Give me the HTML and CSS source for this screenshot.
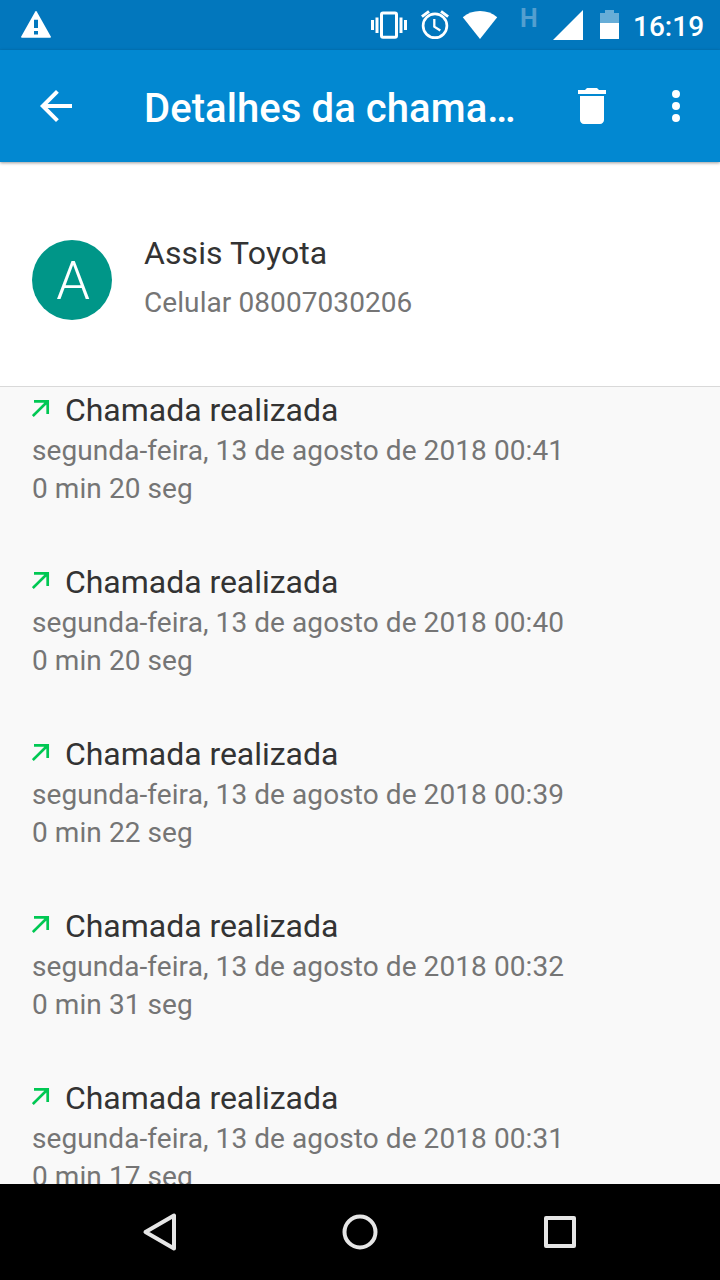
FILE: index.html
```
<!DOCTYPE html>
<html lang="pt-BR">
<head>
  <meta charset="UTF-8" />
  <meta name="viewport" content="width=device-width, initial-scale=1.0"/>
  <title>Detalhes da chamada</title>
  <link rel="stylesheet" href="styles.css">
</head>
<body>

  <div class="status-bar">
    <svg class="icon-warning" width="32" height="30" viewBox="0 0 32 30">
      <path d="M15.300 1.600Q16 .6 16.700 1.600L30.800 26.500Q31.200 27.800 30 27.800H2Q.8 27.800 1.200 26.500Z" fill="#fff"/>
      <path d="M14 9.800h4v8.200h-4zM14 21h4v3.500h-4z" fill="#0277bd"/>
    </svg>

    <div class="status-icons">
      <svg width="36" height="30" viewBox="0 0 36 30">
        <rect x="10.500" y="2.900" width="15" height="24.300" rx="1.500" fill="none" stroke="#fff" stroke-width="3"/>
        <path d="M0 10h3v10H0zM4.500 7.500h3v15.500h-3zM28.500 7.500h3v15.500h-3zM33 10h3v10h-3z" fill="#fff"/>
      </svg>
      <svg class="icon-alarm" width="28" height="30" viewBox="0 0 28 30">
        <g fill="none" stroke="#fff">
          <circle cx="14" cy="15.800" r="11.900" stroke-width="2.700"/>
          <path d="M.9 6.700L8 1.300M20 1.300l7.100 5.400" stroke-width="2.900"/>
          <path d="M13.300 9v7.700l6 3.800" stroke-width="2.300"/>
        </g>
      </svg>
      <svg class="icon-wifi" width="36" height="30" viewBox="0 0 36 30">
        <path d="M18 29L.8 7.300Q8 1 18 1t17.200 6.300Z" fill="#fff"/>
      </svg>
      <span class="network">H</span>
      <svg class="icon-signal" width="30" height="30" viewBox="0 0 30 30">
        <path d="M0 30L30 0v30z" fill="#fff"/>
      </svg>
      <svg class="icon-battery" width="19" height="30" viewBox="0 0 19 30">
        <path d="M5 0h9v3h5v10H0V3h5z" fill="#67add7"/>
        <path d="M0 13h19v15.500q0 .5-.5.5H.5q-.5 0-.5-.5z" fill="#fff"/>
      </svg>
      <span class="clock">16:19</span>
    </div>
  </div>

  <header class="toolbar">
    <svg width="48" height="48" viewBox="0 0 24 24">
      <path d="M20 11H7.830l5.590-5.590L12 4l-8 8 8 8 1.410-1.410L7.830 13H20z" fill="#fff"/>
    </svg>
    <h1>Detalhes da chama…</h1>
    <svg class="icon-delete" width="48" height="48" viewBox="0 0 24 24">
      <path d="M6 19c0 1.100.9 2 2 2h8c1.100 0 2-.9 2-2V7H6zM19 4h-3.500l-1-1h-5l-1 1H5v2h14z" fill="#fff"/>
    </svg>
    <svg class="icon-more" width="48" height="48" viewBox="0 0 24 24">
      <path d="M12 8a2 2 0 1 0 0-4 2 2 0 0 0 0 4zm0 2a2 2 0 1 0 0 4 2 2 0 0 0 0-4zm0 6a2 2 0 1 0 0 4 2 2 0 0 0 0-4z" fill="#fff"/>
    </svg>
  </header>

  <section class="contact">
    <div class="avatar">A</div>
    <div>
      <div class="name">Assis Toyota</div>
      <div class="number">Celular 08007030206</div>
    </div>
  </section>

  <main class="calls">
    <div class="call">
      <div class="call-type">
        <svg width="18" height="18" viewBox="0 0 18 18"><path d="M2 1.300h13.700V14M15.500 1.500L.8 16" fill="none" stroke="#00c853" stroke-width="2.700"/></svg>
        Chamada realizada
      </div>
      <div class="detail">segunda-feira, 13 de agosto de 2018 00:41</div>
      <div class="detail">0 min 20 seg</div>
    </div>
    <div class="call">
      <div class="call-type">
        <svg width="18" height="18" viewBox="0 0 18 18"><path d="M2 1.300h13.700V14M15.500 1.500L.8 16" fill="none" stroke="#00c853" stroke-width="2.700"/></svg>
        Chamada realizada
      </div>
      <div class="detail">segunda-feira, 13 de agosto de 2018 00:40</div>
      <div class="detail">0 min 20 seg</div>
    </div>
    <div class="call">
      <div class="call-type">
        <svg width="18" height="18" viewBox="0 0 18 18"><path d="M2 1.300h13.700V14M15.500 1.500L.8 16" fill="none" stroke="#00c853" stroke-width="2.700"/></svg>
        Chamada realizada
      </div>
      <div class="detail">segunda-feira, 13 de agosto de 2018 00:39</div>
      <div class="detail">0 min 22 seg</div>
    </div>
    <div class="call">
      <div class="call-type">
        <svg width="18" height="18" viewBox="0 0 18 18"><path d="M2 1.300h13.700V14M15.500 1.500L.8 16" fill="none" stroke="#00c853" stroke-width="2.700"/></svg>
        Chamada realizada
      </div>
      <div class="detail">segunda-feira, 13 de agosto de 2018 00:32</div>
      <div class="detail">0 min 31 seg</div>
    </div>
    <div class="call">
      <div class="call-type">
        <svg width="18" height="18" viewBox="0 0 18 18"><path d="M2 1.300h13.700V14M15.500 1.500L.8 16" fill="none" stroke="#00c853" stroke-width="2.700"/></svg>
        Chamada realizada
      </div>
      <div class="detail">segunda-feira, 13 de agosto de 2018 00:31</div>
      <div class="detail">0 min 17 seg</div>
    </div>
  </main>

  <nav class="nav-bar">
    <svg width="40" height="40" viewBox="0 0 40 40">
      <path d="M5.500 20L34 3.500v33z"/>
    </svg>
    <svg width="40" height="40" viewBox="0 0 40 40">
      <circle cx="20" cy="20" r="15.500"/>
    </svg>
    <svg width="40" height="40" viewBox="0 0 40 40">
      <rect x="6" y="6" width="28" height="28"/>
    </svg>
  </nav>

</body>
</html>
```

FILE: styles.css
```
:root {
  --primary: #0288d1;
  --primary-dark: #0277bd;
  --text: #333;
  --text-light: #757575;
  --bg: #f9f9f9;
}

* {
  box-sizing: border-box;
}

body {
  margin: 0;
  height: 1280px;
  display: flex;
  flex-direction: column;
  overflow: hidden;
  font-family: Roboto, sans-serif;
  color: var(--text);
  background-color: var(--bg);
}

svg {
  display: block;
  flex: none;
}

.status-bar {
  flex: none;
  height: 50px;
  padding: 10px 16px 10px 20px;
  display: flex;
  justify-content: space-between;
  background-color: var(--primary-dark);
  color: #fff;
}

.status-icons {
  display: flex;
}

.icon-alarm {
  margin-left: 14px;
}

.icon-wifi {
  margin-left: 13px;
}

.network {
  width: 18px;
  margin-left: 22px;
  font-size: 25px;
  line-height: 18px;
  font-weight: bold;
  color: #539fd0;
}

.icon-signal {
  margin-left: 15px;
}

.icon-battery {
  margin-left: 17px;
}

.clock {
  width: 71px;
  margin-left: 14px;
  font-size: 28px;
  line-height: 34px;
  font-weight: 500;
}

.toolbar {
  flex: none;
  height: 112px;
  padding: 0 20px 0 32px;
  display: flex;
  align-items: center;
  position: relative;
  background-color: var(--primary);
  color: #fff;
  box-shadow: 0 1px 3px rgba(0, 0, 0, 0.4);
}

h1 {
  flex: 1;
  margin: 6px 0 0 64px;
  font-size: 40px;
  line-height: 48px;
  font-weight: 500;
  letter-spacing: 0.08px;
  white-space: nowrap;
}

.icon-more {
  margin-left: 36px;
}

.contact {
  flex: none;
  height: 225px;
  padding: 0 32px;
  display: flex;
  align-items: center;
  gap: 32px;
  background-color: #fff;
  border-bottom: 1px solid #d9d9d9;
}

.avatar {
  width: 80px;
  height: 80px;
  margin-top: 12px;
  padding-left: 2px;
  border-radius: 50%;
  background-color: #009688;
  color: #fff;
  font-size: 54px;
  line-height: 82px;
  font-weight: 300;
  text-align: center;
}

.name {
  margin-top: 9px;
  font-size: 32px;
  line-height: 48px;
  letter-spacing: 0.1px;
}

.number {
  font-size: 28px;
  line-height: 51px;
  letter-spacing: 0.08px;
  color: var(--text-light);
}

.calls {
  flex: 1;
  min-height: 0;
  overflow: hidden;
  padding: 4px 32px 0;
}

.call {
  height: 172px;
}

.call-type {
  display: flex;
  gap: 15px;
  margin-bottom: 3px;
  font-size: 32px;
  line-height: 38px;
  letter-spacing: -0.04px;
}

.call-type svg {
  margin-top: 9px;
}

.detail {
  font-size: 28px;
  line-height: 38px;
  letter-spacing: 0.08px;
  color: var(--text-light);
}

.nav-bar {
  flex: none;
  height: 96px;
  display: flex;
  align-items: center;
  justify-content: center;
  gap: 160px;
  background-color: #000;
}

.nav-bar svg {
  fill: none;
  stroke: #e6e6e6;
  stroke-width: 4;
  stroke-linejoin: round;
}
```
